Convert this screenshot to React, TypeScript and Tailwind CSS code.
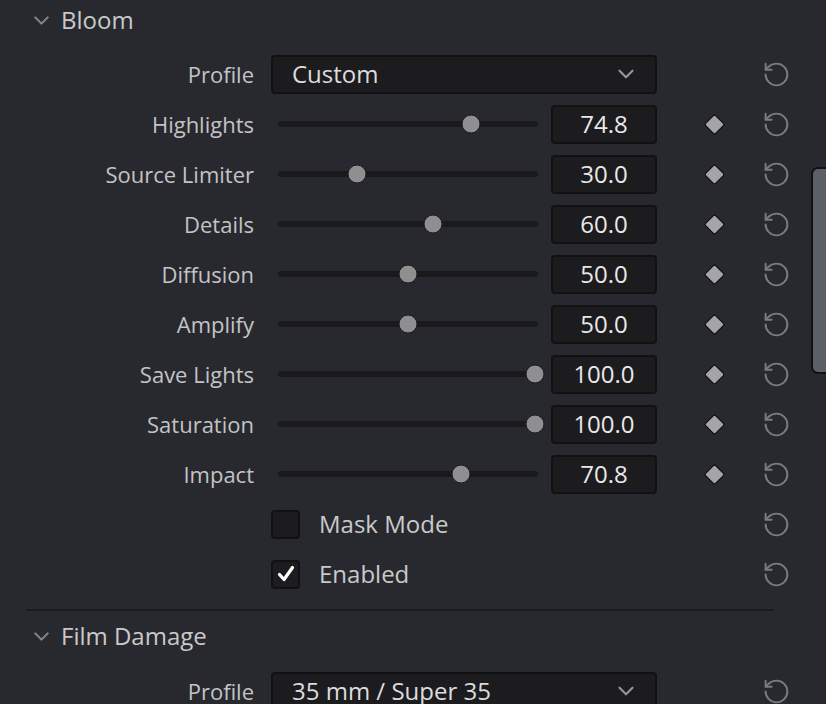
import { ChevronDown, RotateCcw } from "lucide-react"

type SliderRow = { label: string; value: number }

const bloomSliders: SliderRow[] = [
  { label: "Highlights", value: 74.8 },
  { label: "Source Limiter", value: 30.0 },
  { label: "Details", value: 60.0 },
  { label: "Diffusion", value: 50.0 },
  { label: "Amplify", value: 50.0 },
  { label: "Save Lights", value: 100.0 },
  { label: "Saturation", value: 100.0 },
  { label: "Impact", value: 70.8 },
]

function Reset() {
  return (
    <div className="ml-[14px] flex w-[48px] items-center justify-center">
      <RotateCcw size={29} strokeWidth={1.6} className="text-[#7b7b7d]" />
    </div>
  )
}

function Keyframe({ show = true }: { show?: boolean }) {
  return (
    <div className="ml-[33px] flex w-[48px] items-center justify-center">
      {show && <div className="h-[15px] w-[15px] rotate-45 rounded-[2px] border-[1.5px] border-[#0b0b0c] bg-[#a4a4a9]" />}
    </div>
  )
}

function Label({ text }: { text: string }) {
  return <div className="w-[254px] text-right text-[22px] text-[#c3c3c5]">{text}</div>
}

function Header({ title }: { title: string }) {
  return (
    <div className="flex h-[40px] items-center pl-[29px]">
      <ChevronDown size={25} strokeWidth={2} className="text-[#86868a]" />
      <span className="ml-[7px] text-[24px] text-[#c9c9cb]">{title}</span>
    </div>
  )
}

function ProfileRow({ value }: { value: string }) {
  return (
    <div className="flex h-[50px] items-center">
      <Label text="Profile" />
      <div className="ml-[17px] flex h-[39px] w-[386px] items-center justify-between rounded-[4px] border-2 border-[#111113] bg-[#1c1c1e] pl-[19px] pr-[16px]">
        <span className="text-[24px] text-[#dcdcde]">{value}</span>
        <ChevronDown size={26} strokeWidth={2} className="text-[#96969a]" />
      </div>
      <Keyframe show={false} />
      <Reset />
    </div>
  )
}

function Slider({ label, value }: SliderRow) {
  const pos = value / 100
  return (
    <div className="flex h-[50px] items-center">
      <Label text={label} />
      <div className="ml-[17px] flex w-[386px] items-center">
        <div className="relative ml-[7px] h-[6px] w-[260px] rounded-full bg-[#1a1a1c]">
          <div
            className="absolute top-1/2 h-[19px] w-[19px] -translate-x-1/2 -translate-y-1/2 rounded-full border border-[#1c1c1e] bg-[#8f8f91]"
            style={{ left: `${2 + pos * 255}px` }}
          />
        </div>
        <div className="ml-[13px] flex h-[39px] w-[106px] items-center justify-center rounded-[4px] border-2 border-[#111113] bg-[#1c1c1e] text-[24px] text-[#e8e8ea]">
          {value.toFixed(1)}
        </div>
      </div>
      <Keyframe />
      <Reset />
    </div>
  )
}

function CheckRow({ label, checked }: { label: string; checked: boolean }) {
  return (
    <div className="flex h-[50px] items-center">
      <div className="w-[254px]" />
      <div className="ml-[17px] flex w-[386px] items-center">
        <div className="flex h-[29px] w-[29px] items-center justify-center rounded-[4px] border-2 border-[#111113] bg-[#1c1c1e]">
          {checked && (
            <svg width="20" height="20" viewBox="0 0 20 20">
              <path d="M3.5 10.5 L8 15.5 L16.5 3.5" fill="none" stroke="#ffffff" strokeWidth="3.2" strokeLinecap="round" strokeLinejoin="round" />
            </svg>
          )}
        </div>
        <span className="ml-[19px] text-[24px] text-[#c9c9cb]">{label}</span>
      </div>
      <Keyframe show={false} />
      <Reset />
    </div>
  )
}

export default function App() {
  return (
    <div
      className="relative h-[704px] w-[826px] overflow-hidden bg-[#28292e]"
      style={{ fontFamily: '"Open Sans", "Noto Sans", sans-serif' }}
    >
      <Header title="Bloom" />
      <div className="mt-[9px]">
        <ProfileRow value="Custom" />
        {bloomSliders.map((s) => (
          <Slider key={s.label} {...s} />
        ))}
        <CheckRow label="Mask Mode" checked={false} />
        <CheckRow label="Enabled" checked />
      </div>
      <div className="ml-[26px] mt-[10px] h-[2px] w-[748px] bg-[#1c1c1f]" />
      <div className="mt-[5px]">
        <Header title="Film Damage" />
      </div>
      <div className="mt-[10px]">
        <ProfileRow value="35 mm / Super 35" />
      </div>
      <div className="absolute right-[-6px] top-[167px] h-[207px] w-[21px] rounded-[7px] border-2 border-[#111113] bg-[#5b5f67]" />
    </div>
  )
}
